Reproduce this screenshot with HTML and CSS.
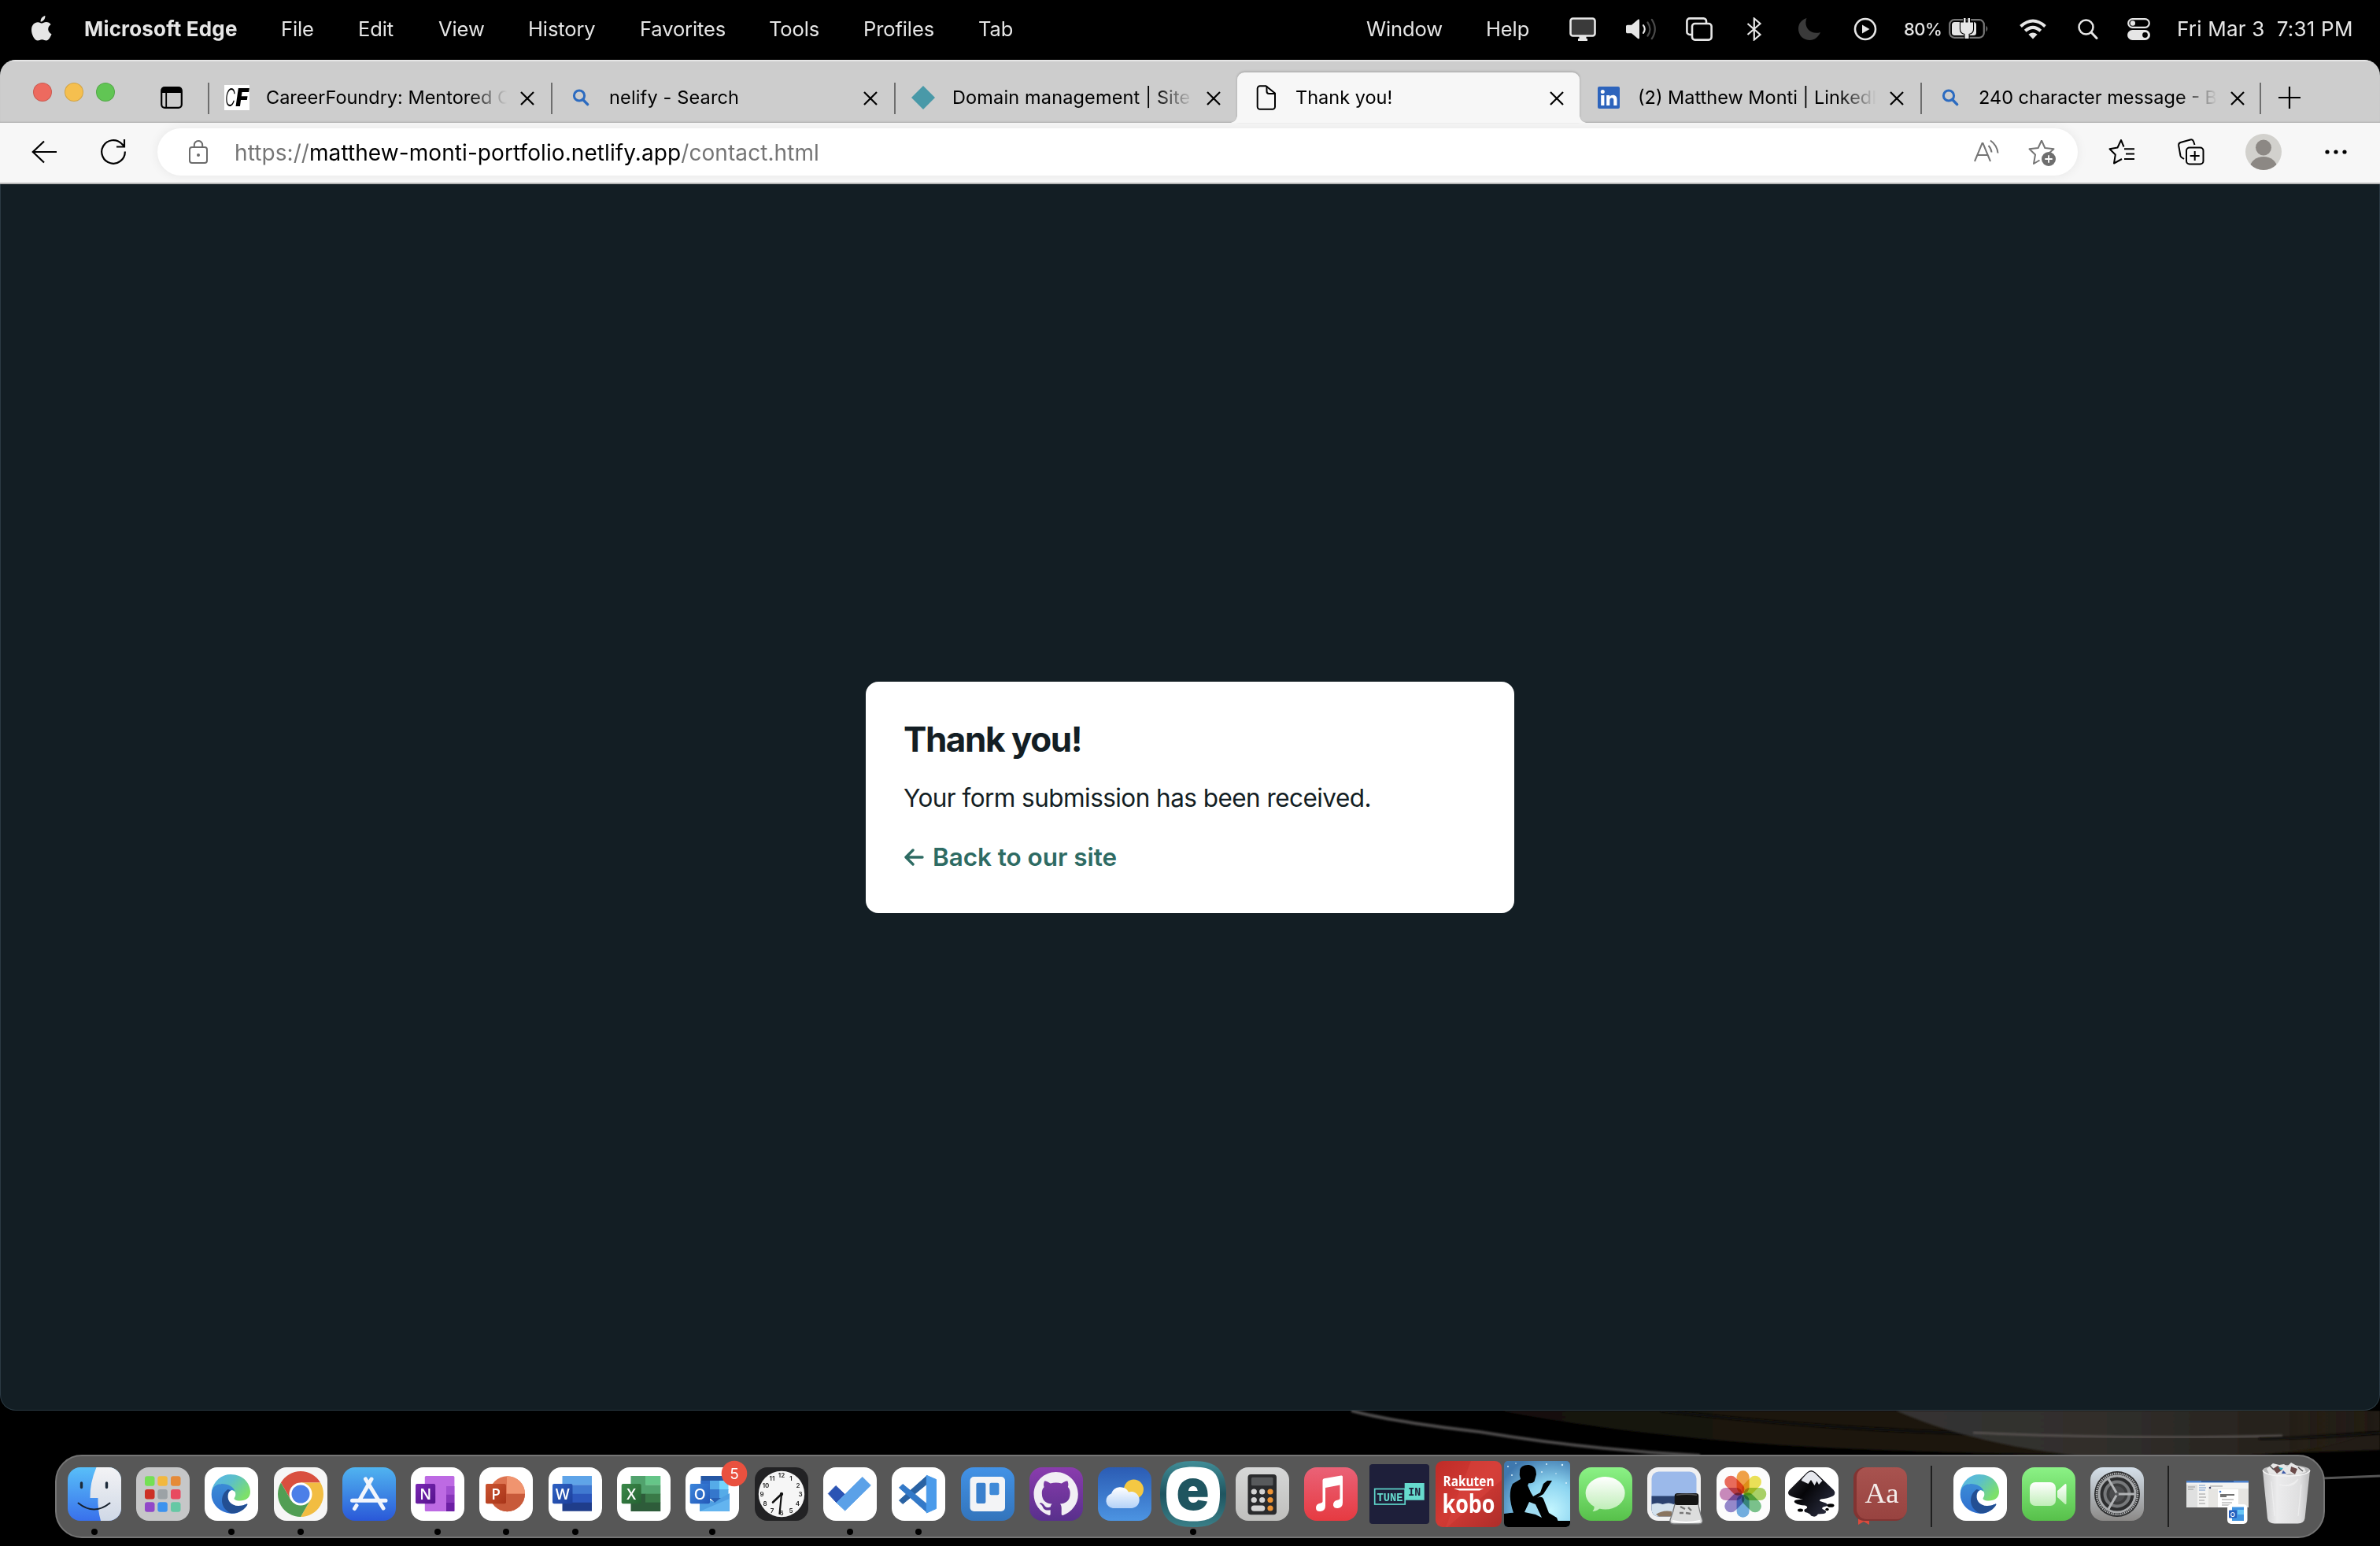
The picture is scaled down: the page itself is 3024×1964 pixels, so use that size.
FILE: index.html
```html
<!DOCTYPE html>
<html lang="en">
<head>
<meta charset="utf-8">
<title>Thank you!</title>
<link rel="stylesheet" href="styles.css">
</head>
<body>
<svg class="defs" width="0" height="0" aria-hidden="true">
  <defs>
    <linearGradient id="g-finder-l" x1="0" y1="0" x2="0" y2="1"><stop offset="0" stop-color="#5cc8fa"/><stop offset="1" stop-color="#3567ea"/></linearGradient>
    <linearGradient id="g-finder-r" x1="0" y1="0" x2="0" y2="1"><stop offset="0" stop-color="#f3f3f5"/><stop offset="1" stop-color="#cfd8e6"/></linearGradient>
    <linearGradient id="g-edge-top" x1="0" y1="0" x2="1" y2=".6"><stop offset="0" stop-color="#58b4ee"/><stop offset=".5" stop-color="#5cc0c8"/><stop offset="1" stop-color="#7de06a"/></linearGradient>
    <linearGradient id="g-edge-blue" x1="0" y1="0" x2="0" y2="1"><stop offset="0" stop-color="#3b8bd6"/><stop offset="1" stop-color="#2f6fd0"/></linearGradient>
    <linearGradient id="g-store" x1="0" y1="0" x2="0" y2="1"><stop offset="0" stop-color="#50b4f0"/><stop offset="1" stop-color="#2a58d8"/></linearGradient>
    <linearGradient id="g-git" x1="0" y1="0" x2="0" y2="1"><stop offset="0" stop-color="#8a3cae"/><stop offset="1" stop-color="#58308c"/></linearGradient>
    <linearGradient id="g-trello" x1="0" y1="0" x2="0" y2="1"><stop offset="0" stop-color="#4292e6"/><stop offset="1" stop-color="#3374bb"/></linearGradient>
    <linearGradient id="g-weather" x1="0" y1="0" x2="0" y2="1"><stop offset="0" stop-color="#2b5cb4"/><stop offset="1" stop-color="#4c94e2"/></linearGradient>
    <linearGradient id="g-cloud" x1="0" y1="0" x2="0" y2="1"><stop offset="0" stop-color="#fff"/><stop offset="1" stop-color="#b4d2f8"/></linearGradient>
    <linearGradient id="g-e" x1="0" y1="0" x2="0" y2="1"><stop offset="0" stop-color="#418d97"/><stop offset=".5" stop-color="#1f5560"/><stop offset="1" stop-color="#3a7f88"/></linearGradient>
    <linearGradient id="g-music" x1="0" y1="0" x2="0" y2="1"><stop offset="0" stop-color="#ea6277"/><stop offset="1" stop-color="#e63a41"/></linearGradient>
    <linearGradient id="g-grey" x1="0" y1="0" x2="0" y2="1"><stop offset="0" stop-color="#d6d7d7"/><stop offset="1" stop-color="#bfbfbd"/></linearGradient>
    <linearGradient id="g-kobo" x1="0" y1="0" x2="1" y2="1"><stop offset="0" stop-color="#bf2c27"/><stop offset=".5" stop-color="#d13a34"/><stop offset="1" stop-color="#ad2d2a"/></linearGradient>
    <radialGradient id="g-kindle" cx=".7" cy=".75" r=".85"><stop offset="0" stop-color="#c4f6ff"/><stop offset=".5" stop-color="#8cd4f0"/><stop offset="1" stop-color="#3f78ae"/></radialGradient>
    <linearGradient id="g-green" x1="0" y1="0" x2="0" y2="1"><stop offset="0" stop-color="#8bf286"/><stop offset="1" stop-color="#57c04a"/></linearGradient>
    <linearGradient id="g-bubble" x1="0" y1="0" x2="0" y2="1"><stop offset="0" stop-color="#fff"/><stop offset="1" stop-color="#c0eeb8"/></linearGradient>
    <linearGradient id="g-ink" x1="0" y1="0" x2="1" y2=".8"><stop offset="0" stop-color="#2c2c34"/><stop offset=".45" stop-color="#050508"/><stop offset="1" stop-color="#2c2f42"/></linearGradient>
    <linearGradient id="g-dict" x1="0" y1="0" x2="0" y2="1"><stop offset="0" stop-color="#a8534f"/><stop offset="1" stop-color="#984340"/></linearGradient>
    <linearGradient id="g-set" x1="0" y1="0" x2="0" y2="1"><stop offset="0" stop-color="#d5e0ea"/><stop offset="1" stop-color="#8b8987"/></linearGradient>
    <linearGradient id="g-badge-n" x1="0" y1="0" x2="1" y2="1"><stop offset="0" stop-color="#7a28b4"/><stop offset="1" stop-color="#55128c"/></linearGradient>
    <linearGradient id="g-badge-p" x1="0" y1="0" x2="1" y2="1"><stop offset="0" stop-color="#cb5430"/><stop offset="1" stop-color="#a83418"/></linearGradient>
    <linearGradient id="g-badge-w" x1="0" y1="0" x2="1" y2="1"><stop offset="0" stop-color="#2f62c4"/><stop offset="1" stop-color="#1c3f9c"/></linearGradient>
    <linearGradient id="g-badge-x" x1="0" y1="0" x2="1" y2="1"><stop offset="0" stop-color="#3c8a4a"/><stop offset="1" stop-color="#256232"/></linearGradient>
    <linearGradient id="g-badge-o" x1="0" y1="0" x2="1" y2="1"><stop offset="0" stop-color="#3b86dc"/><stop offset="1" stop-color="#2458b8"/></linearGradient>
    <linearGradient id="g-trash" x1="0" y1="0" x2="1" y2="0"><stop offset="0" stop-color="#c9c9ca"/><stop offset=".3" stop-color="#ececed"/><stop offset=".8" stop-color="#dededf"/><stop offset="1" stop-color="#bcbcbd"/></linearGradient>
    <linearGradient id="g-brown" x1="0" y1="0" x2="1" y2="0"><stop offset="0" stop-color="#12100c"/><stop offset=".25" stop-color="#1a1610"/><stop offset=".7" stop-color="#1c1911"/><stop offset="1" stop-color="#231d12"/></linearGradient>
    <linearGradient id="g-sheen" x1="0" y1="0" x2="1" y2="0"><stop offset="0" stop-color="#353433"/><stop offset=".5" stop-color="#2f2d2a"/><stop offset=".8" stop-color="#26211b"/><stop offset="1" stop-color="#221b12" stop-opacity="0"/></linearGradient>
    <filter id="soft" x="-5%" y="-20%" width="110%" height="140%"><feGaussianBlur stdDeviation="1"/></filter>
    <clipPath id="tileclip"><rect x="8" y="8" width="68" height="68" rx="16"/></clipPath>
    <clipPath id="kindleclip"><rect width="84" height="84" rx="5"/></clipPath>
    <symbol id="close" viewBox="0 0 18 18"><path d="M1 1 17 17M17 1 1 17" stroke="#000" stroke-width="2.2" fill="none"/></symbol>
    <symbol id="find" viewBox="0 0 22 22"><circle cx="9" cy="8.5" r="6.6" fill="none" stroke="#2c6bc0" stroke-width="3"/><path d="M13.4 13.2 19.6 19.6" stroke="#2c6bc0" stroke-width="3.4" stroke-linecap="round"/></symbol>
    <symbol id="white" viewBox="0 0 84 84"><rect x="8" y="8" width="68" height="68" rx="16" fill="#fff"/></symbol>
    <symbol id="edge" viewBox="0 0 84 84">
      <rect x="8" y="8" width="68" height="68" rx="16" fill="#fff"/>
      <path fill="url(#g-edge-top)" d="M16.8 39C19 25 30 17 41 17c16 0 25 11.500 25 22 0 8-6 11.500-13 11.500-6 0-8.500-2-7-4 1.500-2 1.800-5 .5-7.500L28 29z"/>
      <path fill="url(#g-edge-blue)" d="M16.700 42.500C16.700 33 23 29 30 29c8 0 15 4 16.500 9.500C44 36 40 37 38.500 40.500 35 48 40 58 50 58c6 0 9.500-3.500 12-3.500 1 .8-5 8-11 10.800-4.500 2-10.500 2-15 .500C24 62.500 16.700 53 16.700 42.500z"/>
      <path fill="#234f93" d="M37.500 36C27 43 27 60 41.500 66.500c10 .5 18-5 21-11.200 0-2.300-3 1.700-11.500 1.700-10 0-15.500-8-13-16.500 1-2.500 3-3.500 3-3.500z"/>
    </symbol>
  </defs>
</svg>

<header class="menubar">
  <svg class="apple" viewBox="0 0 26 32"><path fill="#e6e6e6" d="M17.400 0c.2 2.200-.6 4.200-1.800 5.600-1.200 1.400-2.700 2.100-4 2-.2-2 .6-4 1.800-5.300C14.600 1 16.200.1 17.400 0zM13.300 9.600c1.500 0 2.800-1.500 5.500-1.500 2.300 0 4.500 1.200 5.800 3.200-5 2.900-4.200 9.800.9 11.900-.8 2.200-3.300 8.300-6.700 8.400-2.200 0-2.900-1.300-5.400-1.300s-3.300 1.300-5.400 1.300C4.100 31.600 0 24.200 0 17.900c0-6.200 3.900-9.700 8-9.700 2.500 0 3.900 1.400 5.300 1.400z"/></svg>
  <nav class="menus">
    <span class="app">Microsoft Edge</span><span>File</span><span>Edit</span><span>View</span><span>History</span><span>Favorites</span><span>Tools</span><span>Profiles</span><span>Tab</span><span>Window</span><span>Help</span>
  </nav>
  <div class="status">
    <svg width="34" height="30" viewBox="0 0 34 30"><rect x="1.500" y="1.500" width="31" height="22" rx="3" fill="#3a3a3a" stroke="#e6e6e6" stroke-width="2.600"/><path d="M12.500 24h9v3h1.500v3H11v-3h1.500z" fill="#e6e6e6"/></svg>
    <svg width="39" height="28" viewBox="0 0 39 28"><path d="M0 10.500C0 9.500.8 8.700 1.800 8.700H7L15 2c1-.8 2-.3 2 .9v22.200c0 1.200-1 1.700-2 .9l-8-6.700H1.800c-1 0-1.800-.8-1.800-1.800z" fill="#e6e6e6"/><g fill="none" stroke-width="2.200" stroke-linecap="round"><path d="M22 9.200q3.500 4.800 0 9.600" stroke="#e6e6e6"/><path d="M27.500 5.500q6 8.500 0 17M32.800 1.800q8 12.200 0 24.400" stroke="#4a4a4a"/></g></svg>
    <svg width="34" height="30" viewBox="0 0 34 30"><g fill="none" stroke="#e6e6e6" stroke-width="2.600"><path d="M7 22H5a3.600 3.600 0 0 1-3.600-3.600V5A3.600 3.600 0 0 1 5 1.400h17.500A3.600 3.600 0 0 1 26 5v2"/><rect x="8" y="8" width="24.600" height="20.600" rx="3.600"/></g></svg>
    <svg width="20" height="30" viewBox="0 0 20 30"><path d="M1.500 8 17.500 22 9.800 28.500V1.500L17.500 8 1.500 22" fill="none" stroke="#e6e6e6" stroke-width="2.200"/></svg>
    <svg width="28" height="28" viewBox="0 0 28 28"><path d="M10.500 0C6 11 15 22 28 18 25.500 24 20.500 28 14.500 28 6 28 0 21.500 0 13.500 0 7 4 2 10.500 0z" fill="#3a3a3a"/></svg>
    <svg width="30" height="30" viewBox="0 0 30 30"><circle cx="15" cy="15" r="13" fill="none" stroke="#e6e6e6" stroke-width="2.600"/><path d="M11 9.500v11l9.500-5.500z" fill="#e6e6e6"/></svg>
    <span class="pct">80%</span>
    <svg width="51" height="28" viewBox="0 0 51 28"><rect x="1.200" y="2.200" width="43.600" height="22.600" rx="6" fill="none" stroke="#777" stroke-width="2.200"/><path d="M47.500 9.500q3.500 4 0 8z" fill="#777"/><rect x="4" y="5" width="31" height="17" rx="3.500" fill="#e6e6e6"/><path d="M19 0v5.500h-4V14q0 5 5.500 6v6h5v-6q5.500-1 5.500-6V5.500h-4V0h-2.500v5.500h-3V0z" fill="#e6e6e6" stroke="#000" stroke-width="2.200" paint-order="stroke"/></svg>
    <svg width="34" height="26" viewBox="0 0 34 26"><g fill="none" stroke="#e6e6e6" stroke-width="4"><path d="M1.500 9.500q15.500-14 31 0"/><path d="M7.200 15.200q9.800-8.800 19.600 0"/></g><path d="M17 25.500l-5.600-5.700q5.600-4.400 11.200 0z" fill="#e6e6e6"/></svg>
    <svg width="26" height="26" viewBox="0 0 26 26"><circle cx="10.500" cy="10.500" r="9" fill="none" stroke="#e6e6e6" stroke-width="2.500"/><path d="M17 17l7 7.500" stroke="#e6e6e6" stroke-width="3" stroke-linecap="round"/></svg>
    <svg width="29" height="28" viewBox="0 0 29 28"><rect x="1.200" y="1.200" width="26.600" height="10.600" rx="5.300" fill="none" stroke="#e6e6e6" stroke-width="2.200"/><circle cx="6.800" cy="6.500" r="3.200" fill="#e6e6e6"/><rect y="15" width="29" height="13" rx="6.500" fill="#e6e6e6"/><circle cx="22.500" cy="21.500" r="3.400" fill="#000"/></svg>
    <span class="clock">Fri Mar 3&nbsp; 7:31 PM</span>
  </div>
</header>

<main class="window">
  <div class="tabstrip">
    <div class="lights"><i class="red"></i><i class="amber"></i><i class="green"></i></div>
    <svg class="tabmenu" viewBox="0 0 28 28"><rect x="1.200" y="1.200" width="25.600" height="25.600" rx="4" fill="none" stroke="#000" stroke-width="2.200"/><path d="M1 8V4a3 3 0 0 1 3-3h20a3 3 0 0 1 3 3v4z"/><path d="M7.200 8v19" stroke="#000" stroke-width="1.800"/></svg>
    <div class="tab">
      <svg class="fav" viewBox="0 0 32 32"><rect width="32" height="32" fill="#fff"/><text x="1" y="27" class="cf-c" textLength="13" lengthAdjust="spacingAndGlyphs">C</text><text x="14.500" y="27" class="cf-f" textLength="16" lengthAdjust="spacingAndGlyphs">F</text></svg>
      <span class="title">CareerFoundry: Mentored Online</span><svg class="x"><use href="#close"/></svg>
    </div>
    <div class="tab">
      <svg class="fav find"><use href="#find"/></svg>
      <span class="title loose">nelify - Search</span><svg class="x"><use href="#close"/></svg>
    </div>
    <div class="tab">
      <svg class="fav" viewBox="0 0 32 32"><path d="M16 1 31 16 16 31 1 16z" fill="#4999a8"/></svg>
      <span class="title loose">Domain management | Site settings</span><svg class="x"><use href="#close"/></svg>
    </div>
    <div class="tab active">
      <svg class="fav" viewBox="0 0 32 32"><path d="M8 1.200h7.500L27 10.500v17a3.300 3.300 0 0 1-3.300 3.300H8a3.300 3.300 0 0 1-3.300-3.300v-23A3.300 3.300 0 0 1 8 1.200z" fill="none" stroke="#000" stroke-width="2"/><path d="M16.500 1.500v6.500a3 3 0 0 0 3 3H27" fill="none" stroke="#000" stroke-width="2"/></svg>
      <span class="title">Thank you!</span><svg class="x"><use href="#close"/></svg>
    </div>
    <div class="tab narrow">
      <svg class="fav" viewBox="0 0 32 32"><rect x="2" y="2" width="28" height="28" rx="2" fill="#2d64bc"/><circle cx="8.300" cy="8.500" r="2.500" fill="#fff"/><path d="M6.200 13h4.200v13H6.200zM13.200 13h4v1.900c1.800-3.200 9.300-3.100 9.300 3.100v8h-4.200v-7c0-4-5-3.500-5 .2V26h-4.100z" fill="#fff"/></svg>
      <span class="title">(2) Matthew Monti | LinkedIn</span><svg class="x"><use href="#close"/></svg>
    </div>
    <div class="tab narrow last">
      <svg class="fav find"><use href="#find"/></svg>
      <span class="title">240 character message - Bing</span><svg class="x"><use href="#close"/></svg>
    </div>
    <svg class="plus" viewBox="0 0 28 28"><path d="M14 0v28M0 14h28" stroke="#000" stroke-width="2.200"/></svg>
  </div>

  <div class="toolbar">
    <svg class="back" viewBox="0 0 32 30"><path d="M16 1.500 1.800 15 16 28.500M2 15h30" fill="none" stroke="#000" stroke-width="2.200"/></svg>
    <svg class="reload" viewBox="0 0 32 34"><path d="M30.800 16.500A14.800 14.800 0 1 1 26.500 6.500L29.500 9.500M30 1v9.500H20" fill="none" stroke="#000" stroke-width="2.200"/></svg>
    <div class="address">
      <svg class="lock" viewBox="0 0 24 30"><rect x="1" y="9" width="22" height="20" rx="3" fill="none" stroke="#6b6b6b" stroke-width="2"/><path d="M6.800 9V6.200a5.200 5.200 0 0 1 10.400 0V9" fill="none" stroke="#6b6b6b" stroke-width="2"/><circle cx="12" cy="19" r="2" fill="#6b6b6b"/></svg>
      <span class="url"><em>https://</em>matthew-monti-portfolio.netlify.app<em>/contact.html</em></span>
      <svg class="aloud" viewBox="0 0 32 30"><g fill="none" stroke="#757575" stroke-width="2"><path d="M1 28 10.500 5h1L21 28M4.500 20h13"/><path d="M18.500 8q3.500 3.500 4 8.500M21 1.500q8.500 6 9.500 16" /></g></svg>
      <svg class="star" viewBox="0 0 36 36"><path d="M17 2.500 21.300 12 32.500 13.200 27 18M14.500 27.500 7 32l2-11.500L1.500 13.200 12.600 12 17 2.500" fill="none" stroke="#757575" stroke-width="2" stroke-linejoin="round"/><circle cx="26" cy="26" r="9" fill="#6e6e6e"/><path d="M26 21.300v9.400M21.300 26h9.400" stroke="#fff" stroke-width="1.800"/></svg>
    </div>
    <svg class="favs" viewBox="0 0 34 34"><path d="M19.500 10.500 16 2l-4.500 9.500L1.500 13.200 8.800 20.500 7 31.500 17 26" fill="none" stroke="#000" stroke-width="2" stroke-linejoin="round"/><path d="M20 13.200h13M22 19.500h11M20 26h13" stroke="#000" stroke-width="2"/></svg>
    <svg class="coll" viewBox="0 0 34 34"><g fill="none" stroke="#000" stroke-width="2"><path d="M8 26 5 24Q4 23.500 3.500 22L1.200 9q-.4-3 2.300-4L16 1.500q3-.8 4 2L21.500 8"/><rect x="11" y="11.500" width="21.500" height="21" rx="4"/><path d="M21.700 16v12M15.700 22h12"/></g></svg>
    <svg class="avatar" viewBox="0 0 46 46"><clipPath id="av"><circle cx="23" cy="23" r="23"/></clipPath><g clip-path="url(#av)"><rect width="46" height="46" fill="#d2d1cd"/><circle cx="23" cy="17.500" r="10" fill="#8c8884"/><ellipse cx="23" cy="43" rx="17" ry="14" fill="#8c8884"/></g></svg>
    <svg class="more" viewBox="0 0 28 6"><circle cx="3" cy="3" r="2.600"/><circle cx="14" cy="3" r="2.600"/><circle cx="25" cy="3" r="2.600"/></svg>
  </div>

  <div class="page">
    <section class="card">
      <h1>Thank you!</h1>
      <p>Your form submission has been received.</p>
      <a><svg class="arrow" viewBox="0 0 26 22"><path d="M12 2 3 11l9 9M3.500 11H24" fill="none" stroke="#2e6b63" stroke-width="3.400" stroke-linecap="round" stroke-linejoin="round"/></svg>Back to our site</a>
    </section>
  </div>
</main>

<footer class="desktop">
  <svg class="wallpaper" viewBox="0 0 3024 172">
    <path d="M1905 0C2020 22 2160 38 2300 46 2480 56 2760 60 3024 50V0z" fill="url(#g-brown)" filter="url(#soft)"/>
    <path d="M2110 0Q2300 22 2480 28L2780 36Q2900 36 3024 28" fill="none" stroke="#0c0a07" stroke-width="4" filter="url(#soft)"/>
    <path d="M2409 0C2450 18 2520 44 2640 57H2800Q2960 58 3024 20V0z" fill="url(#g-sheen)" filter="url(#soft)"/>
    <path d="M2507 28Q2700 37 2900 32" fill="none" stroke="#54504d" stroke-width="3" filter="url(#soft)"/>
    <path d="M2870 36Q2960 34 3024 28" fill="none" stroke="#100c08" stroke-width="3" filter="url(#soft)"/>
    <path d="M1717 0C1760 12 1820 20 1880 27Q2020 50 2160 57" fill="none" stroke="#4c4a4a" stroke-width="4" filter="url(#soft)"/>
    <path d="M2950 86 3024 83" stroke="#555" stroke-width="3"/>
  </svg>
  <div class="dock">
    <div class="cell run"><svg viewBox="0 0 84 84"><g clip-path="url(#tileclip)"><rect width="84" height="84" fill="url(#g-finder-l)"/><path d="M44.500 8Q36 28 36.500 47H46.500Q46 62 50 76H76V8z" fill="url(#g-finder-r)"/></g><path d="M25.500 28v5.500M57.500 28v5.500" stroke="#1c2a3a" stroke-width="3.400" stroke-linecap="round"/><path d="M21.500 53.500q20 16 40 0" fill="none" stroke="#16202c" stroke-width="2" stroke-linecap="round"/></svg></div>
    <div class="cell"><svg viewBox="0 0 84 84"><rect x="8" y="8" width="68" height="68" rx="16" fill="#c6c7c8"/><g><rect x="19" y="19.300" width="12.500" height="12.500" rx="3" fill="#74e054"/><rect x="35.300" y="19.300" width="12.500" height="12.500" rx="3" fill="#f2b83e"/><rect x="52" y="19.300" width="12.500" height="12.500" rx="3" fill="#e58a38"/><rect x="19" y="36" width="12.500" height="12.500" rx="3" fill="#cc3025"/><rect x="35.300" y="36" width="12.500" height="12.500" rx="3" fill="#9ca2a6"/><rect x="52" y="36" width="12.500" height="12.500" rx="3" fill="#e84a60"/><rect x="19" y="52.200" width="12.500" height="12.500" rx="3" fill="#9148c8"/><rect x="35.300" y="52.200" width="12.500" height="12.500" rx="3" fill="#3c92ee"/><rect x="52" y="52.200" width="12.500" height="12.500" rx="3" fill="#66c8a4"/></g></svg></div>
    <div class="cell run"><svg><use href="#edge"/></svg></div>
    <div class="cell run"><svg viewBox="0 0 84 84"><rect x="8" y="8" width="68" height="68" rx="16" fill="#f6f6f6"/><path d="M16.900 27.500A29 29 0 0 1 67.100 27.500H42L29.450 49.250z" fill="#d9503f"/><path d="M16.900 27.500A29 29 0 0 1 67.100 27.500H42L29.450 49.250z" fill="#f2bd42" transform="rotate(120 42 42)"/><path d="M16.900 27.500A29 29 0 0 1 67.100 27.500H42L29.450 49.250z" fill="#519e54" transform="rotate(240 42 42)"/><circle cx="42" cy="42" r="14.500" fill="#fff"/><circle cx="42" cy="42" r="11.500" fill="#4b7fe8"/></svg></div>
    <div class="cell"><svg viewBox="0 0 84 84"><rect x="8" y="8" width="68" height="68" rx="16" fill="url(#g-store)"/><path d="M37.500 23 60 60M45 23 30 49.500M26 56.500 23.500 60.500M20.500 50.200H63" stroke="#f2f6fc" stroke-width="5" stroke-linecap="round" fill="none"/></svg></div>
    <div class="cell run"><svg viewBox="0 0 84 84"><use href="#white"/><rect x="25.800" y="19" width="37.600" height="45" rx="1.500" fill="#bd6ae3"/><path d="M53 32h10.400v10.500H53z" fill="#a24fd1"/><path d="M53 42.500h10.400v10.500H53z" fill="#8836bb"/><path d="M53 53h10.400v11H53z" fill="#6c1fa4"/><rect x="14" y="29" width="25.200" height="25.300" rx="2" fill="url(#g-badge-n)"/><text x="26.600" y="48.500" class="badge">N</text></svg></div>
    <div class="cell run"><svg viewBox="0 0 84 84"><use href="#white"/><circle cx="43.500" cy="41.700" r="22.500" fill="#dd7350"/><path d="M43 19.200A22.500 22.500 0 0 1 66 41.700H43z" fill="#f0946f"/><path d="M21 41.700H66A22.500 22.500 0 0 1 21 41.700z" fill="#c85a3a"/><rect x="16" y="29" width="26" height="25.300" rx="2" fill="url(#g-badge-p)"/><text x="29" y="48.500" class="badge">P</text></svg></div>
    <div class="cell run"><svg viewBox="0 0 84 84"><use href="#white"/><path d="M25.500 19H63v11.700H25.500z" fill="#5fa4e8"/><path d="M25.500 30.500H63v11.700H25.500z" fill="#4079d1"/><path d="M25.500 41.700H63v11.500H25.500z" fill="#2c57bc"/><path d="M25.500 52.700H63v11H25.500z" fill="#1f3d8a"/><rect x="13" y="29" width="25.500" height="25.300" rx="2" fill="url(#g-badge-w)"/><text x="25.800" y="48.500" class="badge">W</text></svg></div>
    <div class="cell"><svg viewBox="0 0 84 84"><use href="#white"/><path d="M25.500 19H44.500v23H25.500z" fill="#51a26d"/><path d="M44 19h19.300v11.700H44z" fill="#65c588"/><path d="M44 30.500h19.300v11.700H44z" fill="#51a26d"/><path d="M25.500 41.700h19V64h-19z" fill="#2e5c3a"/><path d="M44 41.700h19.300v11.500H44z" fill="#3a7a48"/><path d="M44 52.700h19.300V64H44z" fill="#2e5c3a"/><rect x="13.700" y="29" width="25" height="25.300" rx="2" fill="url(#g-badge-x)"/><text x="26.200" y="48.500" class="badge">X</text></svg></div>
    <div class="cell run"><svg viewBox="0 0 84 84"><use href="#white"/><path d="M27.500 19H62v10H27.500z" fill="#2557a4"/><path d="M27.500 25H39v22H27.500z" fill="#2f6cc8"/><path d="M39 25h12v12H39z" fill="#55abe8"/><path d="M51 25h11.500v12H51z" fill="#74d5fb"/><path d="M39 36h12v12H39z" fill="#3577cc"/><path d="M51 36h11.500v12H51z" fill="#55abe8"/><path d="M26 43l18 9 20-11v23H26z" fill="#4f9fe2"/><path d="M26 64 63.500 48v16z" fill="#63b4ef"/><path d="M39 47l6 6 8-6z" fill="#2860b4"/><rect x="13.700" y="29" width="25.300" height="25.300" rx="2" fill="url(#g-badge-o)"/><text x="26.300" y="48.500" class="badge">O</text><circle cx="70" cy="16" r="16.300" fill="#e9513f"/><text x="70" y="22.500" class="count">5</text></svg></div>
    <div class="cell"><svg viewBox="0 0 84 84"><rect x="8" y="8" width="68" height="68" rx="16" fill="#222224"/><circle cx="42" cy="42" r="29.200" fill="#f6f6f6"/><g class="dial"><text x="42" y="21">12</text><text x="54" y="24.500">1</text><text x="63" y="33.500">2</text><text x="66" y="45">3</text><text x="62.500" y="57">4</text><text x="54" y="65.500">5</text><text x="42" y="69">6</text><text x="30" y="65.500">7</text><text x="21" y="57">8</text><text x="17" y="45">9</text><text x="22" y="33.500">10</text><text x="30" y="24.500">11</text></g><path d="M42 42 31 52.500" stroke="#111" stroke-width="2.600" stroke-linecap="round"/><path d="M42 42 39.500 67" stroke="#111" stroke-width="2.200" stroke-linecap="round"/><circle cx="42" cy="42" r="2.200" fill="#111"/></svg></div>
    <div class="cell run"><svg viewBox="0 0 84 84"><use href="#white"/><path d="M14.300 41.500 24 31.500 36 43 25 53z" fill="#2b54b4" stroke="#2b54b4" stroke-linejoin="round"/><path d="M57.800 20.500 68.300 31 35.700 63 25 53z" fill="#5ba1e8" stroke="#5ba1e8" stroke-linejoin="round"/></svg></div>
    <div class="cell run"><svg viewBox="0 0 84 84"><use href="#white"/><path d="M17.500 50 22 54.500 53 29V18.500z" fill="#2962a3" stroke="#2962a3" stroke-linejoin="round"/><path d="M17.500 34 22 29.500 53 55V65.500z" fill="#3379c8" stroke="#3379c8" stroke-linejoin="round"/><path d="M52.300 18.300 64.500 23.500V60.500L52.300 66z" fill="#4b9bea" stroke="#4b9bea" stroke-linejoin="round"/></svg></div>
    <div class="cell"><svg viewBox="0 0 84 84"><rect x="8" y="8" width="68" height="68" rx="16" fill="url(#g-trello)"/><rect x="19.500" y="20" width="44.500" height="44" rx="5" fill="#f3f4f6"/><rect x="27.400" y="27.700" width="12" height="26.300" rx="2" fill="#3a80cd"/><rect x="44.400" y="27.700" width="12" height="15.500" rx="2" fill="#3f8ad8"/></svg></div>
    <div class="cell"><svg viewBox="0 0 84 84"><rect x="8" y="8" width="68" height="68" rx="16" fill="url(#g-git)"/><path transform="translate(13.500 14) scale(3.520)" fill="#f1eff4" d="M8 0C3.580 0 0 3.580 0 8c0 3.540 2.290 6.530 5.470 7.590.4.070.55-.17.55-.38 0-.19-.01-.82-.01-1.490-2.010.37-2.530-.49-2.690-.94-.09-.23-.48-.94-.82-1.130-.28-.15-.68-.52-.01-.53.63-.01 1.080.58 1.230.82.72 1.210 1.870.87 2.330.66.07-.52.28-.87.51-1.070-1.780-.2-3.640-.89-3.640-3.950 0-.87.31-1.590.82-2.150-.08-.2-.36-1.020.08-2.120 0 0 .67-.21 2.200.82.64-.18 1.320-.27 2-.27.68 0 1.360.09 2 .27 1.530-1.040 2.200-.82 2.200-.82.44 1.100.16 1.920.08 2.120.51.56.82 1.270.82 2.150 0 3.070-1.870 3.750-3.650 3.950.29.25.54.73.54 1.480 0 1.070-.01 1.930-.01 2.200 0 .21.150.46.550.38A8.013 8.013 0 0 0 16 8c0-4.420-3.580-8-8-8z"/></svg></div>
    <div class="cell"><svg viewBox="0 0 84 84"><rect x="8" y="8" width="68" height="68" rx="16" fill="url(#g-weather)"/><circle cx="53.500" cy="36" r="12.500" fill="#f4c843"/><path d="M27 60a9.500 9.500 0 0 1-2-18.500A12 12 0 0 1 47 39.500 10.500 10.500 0 1 1 50 60z" fill="url(#g-cloud)"/></svg></div>
    <div class="cell run"><svg viewBox="0 0 84 84"><path d="M42 0C72 0 84 12 84 42S72 84 42 84 0 72 0 42 12 0 42 0z" fill="url(#g-e)"/><path d="M42 7.500C68 7.500 76 16 76 42S68 76.500 42 76.500 8 68 8 42 16 7.500 42 7.500z" fill="#fff"/><text x="41.500" y="61.800" class="bige" textLength="42" lengthAdjust="spacingAndGlyphs">e</text></svg></div>
    <div class="cell"><svg viewBox="0 0 84 84"><rect x="8" y="8" width="68" height="68" rx="16" fill="url(#g-grey)"/><rect x="23.500" y="17" width="36.500" height="51.300" rx="4" fill="#2a2b2d"/><rect x="28" y="20.700" width="27.500" height="10.500" rx="1.500" fill="#585a5c"/><g fill="#d4d4d4"><circle cx="31.300" cy="39" r="3.600"/><circle cx="41.700" cy="39" r="3.600"/><circle cx="31.300" cy="49.500" r="3.600"/><circle cx="41.700" cy="49.500" r="3.600"/><rect x="27.700" y="56.500" width="17.600" height="7.200" rx="3.600"/></g><g fill="#ef9435"><circle cx="52" cy="39" r="3.600"/><circle cx="52" cy="49.500" r="3.600"/><circle cx="52" cy="60" r="3.600"/></g></svg></div>
    <div class="cell"><svg viewBox="0 0 84 84"><rect x="8" y="8" width="68" height="68" rx="16" fill="url(#g-music)"/><path d="M31.500 24.500q0-1.800 2-2.200L55 18.500q2-.4 2 1.500v33q0 6-6 7-5 .5-6-3.500-.5-6 6-7 2.500-.4 2.500-2V30.500L35 34v23q0 6-6 7-6 .5-6-4.500 0-5 6-6 2.500-.5 2.500-2z" fill="#fff"/></svg></div>
    <div class="cell"><svg viewBox="0 0 84 84"><rect x="4" y="4" width="76" height="76" rx="4" fill="#1e1f3a"/><rect x="10.700" y="35.500" width="38.500" height="19.500" fill="none" stroke="#5fd5cb" stroke-width="1.700"/><path d="M48.700 28h25v21.700h-25z" fill="#66dace"/><text x="30" y="51" class="tune" fill="#66dace" textLength="33" lengthAdjust="spacingAndGlyphs">TUNE</text><text x="61.200" y="44.300" class="tune" fill="#1e1f3a" textLength="16" lengthAdjust="spacingAndGlyphs">IN</text></svg></div>
    <div class="cell"><svg viewBox="0 0 84 84"><rect width="84" height="84" rx="9" fill="url(#g-kobo)"/><path d="M45 0h30q9 0 9 9v15L15 84h-2z" fill="#db4640" opacity=".45"/><text x="42" y="32" class="rakuten" textLength="65" lengthAdjust="spacingAndGlyphs">Rakuten</text><path d="M23 35h38l-5 2.500H30z" fill="#fff"/><text x="42" y="65.500" class="kobo" textLength="67" lengthAdjust="spacingAndGlyphs">kobo</text></svg></div>
    <div class="cell"><svg viewBox="0 0 84 84"><g clip-path="url(#kindleclip)"><rect width="84" height="84" fill="url(#g-kindle)"/><g fill="#d8f0fb"><circle cx="5" cy="7" r="1"/><circle cx="15" cy="3" r=".8"/><circle cx="54" cy="4" r="1"/><circle cx="74" cy="5" r="1.200"/><circle cx="48" cy="14" r="1"/><circle cx="66" cy="16" r=".8"/><circle cx="79" cy="28" r="1"/><circle cx="10" cy="18" r="1"/></g><path d="M20 13C20 3 39 2 40.500 13l.5 4-2.500 9q-3 3-7 2L30 31l4 9 3 5 9-5 4-11 5-4h6L50 42 38 49.500 42 47q6-3 8 1l7 18 10 6 1.500 4H84V84H0V67q14-2 12-1Q4 42 11 29l10-6q-2-5-1-10z"/><path d="M32 52l-6 13 14 3 8 4-8-17z" fill="#9edaf0"/></g></svg></div>
    <div class="cell"><svg viewBox="0 0 84 84"><rect x="8" y="8" width="68" height="68" rx="16" fill="url(#g-green)"/><ellipse cx="41.600" cy="40.700" rx="25" ry="20.800" fill="url(#g-bubble)"/><path d="M28 56q0 5-2.500 8 7-.5 10-5z" fill="#c4efbd"/></svg></div>
    <div class="cell"><svg viewBox="0 0 84 84"><rect x="8" y="8" width="68" height="68" rx="14" fill="#f0f0f1"/><rect x="13.500" y="13.500" width="57" height="57" rx="9" fill="#9bb9ea"/><path d="M13.500 44.500h57V61q0 9.500-9.500 9.500H23q-9.500 0-9.500-9.500z" fill="#2b4270"/><path d="M13.500 55q8-3 14 0 8-3 14 0l14-2v17.500H23q-9.500 0-9.500-9.500z" fill="#d4e2ee"/><path d="M19 68q8-6 20-4v6.500H23z" fill="#8a7560"/><path d="M43 55h30q1 8 5 20 1 5-5 5H42q-6 0-5-5 4-10 6-20z" fill="#dcdddd" stroke="#77797b" stroke-width="1.300"/><path d="M50 58l6 3M60 59l4 4M49 66h5M57 66l6 1" stroke="#777" stroke-width="2.400"/><path d="M40 76q17 4 35 0" stroke="#fff" stroke-width="2" fill="none"/><rect x="42.700" y="41" width="30.600" height="15" rx="3.500" fill="#141414"/><path d="M45 43.200q13-2 26 0" stroke="#555" stroke-width="1.500" fill="none"/></svg></div>
    <div class="cell"><svg viewBox="0 0 84 84"><rect x="8" y="8" width="68" height="68" rx="16" fill="#fcfcfc"/><g class="petals"><rect x="33.600" y="12.300" width="16" height="29" rx="8" fill="#f19a38"/><rect x="33.600" y="12.300" width="16" height="29" rx="8" fill="#ece14a" transform="rotate(45 41.600 42)"/><rect x="33.600" y="12.300" width="16" height="29" rx="8" fill="#a3cf5b" transform="rotate(90 41.600 42)"/><rect x="33.600" y="12.300" width="16" height="29" rx="8" fill="#70bf83" transform="rotate(135 41.600 42)"/><rect x="33.600" y="12.300" width="16" height="29" rx="8" fill="#67a8df" transform="rotate(180 41.600 42)"/><rect x="33.600" y="12.300" width="16" height="29" rx="8" fill="#8d80c9" transform="rotate(225 41.600 42)"/><rect x="33.600" y="12.300" width="16" height="29" rx="8" fill="#c681b6" transform="rotate(270 41.600 42)"/><rect x="33.600" y="12.300" width="16" height="29" rx="8" fill="#ea5f4e" transform="rotate(315 41.600 42)"/></g></svg></div>
    <div class="cell"><svg viewBox="0 0 84 84"><use href="#white"/><path d="M36 14.500Q41.300 9.500 46.600 14.500L69.500 36.500Q73.500 41.500 69 44.500 62 48 53.500 48.500 50 50.500 54 51.500L60 53.500Q64 56 60.500 57.500 54 58.500 55.500 61L59.500 63Q61.500 66 57 67L50 67.500Q47 72.500 41 69.500 40 66.500 33.500 65 30.500 62 35 60.500 38 58 33.500 56.500 24 56 20.500 53 18.500 50.500 22 49.500L31 48.500Q20 47 13.500 43.500 10.500 40.500 13.500 37z" fill="url(#g-ink)"/><path d="M36.500 15.500Q41.300 11.500 46 15.500L55.500 25 51 30 48.500 25.500 45.500 31 41 24 37.500 29 29 25q-1-1 7.500-9.500z" fill="#e6e8ee"/><ellipse cx="66" cy="56.500" rx="4.500" ry="2.300"/><ellipse cx="27.500" cy="62.500" rx="3.500" ry="2"/><ellipse cx="61.500" cy="61.500" rx="2.200" ry="1.800"/></svg></div>
    <div class="cell"><svg viewBox="0 0 84 84"><path d="M14 70h14v11l-7-4-7 4z" fill="#dc4a3c"/><rect x="8" y="8" width="67" height="68" rx="14" fill="#823432"/><rect x="12" y="8" width="64" height="66" rx="13" fill="url(#g-dict)"/><text x="44" y="52.500" class="dict" textLength="43" lengthAdjust="spacingAndGlyphs">Aa</text></svg></div>
    <i class="sep"></i>
    <div class="cell"><svg><use href="#edge"/></svg></div>
    <div class="cell"><svg viewBox="0 0 84 84"><rect x="8" y="8" width="68" height="68" rx="16" fill="url(#g-green)"/><rect x="18" y="27" width="33" height="30" rx="7" fill="url(#g-bubble)"/><path d="M53 38 62.500 29.500q2-1.500 2 1v23q0 2.500-2 1L53 46z" fill="url(#g-bubble)"/></svg></div>
    <div class="cell"><svg viewBox="0 0 84 84"><rect x="8" y="8" width="68" height="68" rx="16" fill="url(#g-set)"/><circle cx="42" cy="42" r="29" fill="#2c2d2e"/><circle cx="42" cy="42" r="26" fill="none" stroke="#b4b6b8" stroke-width="2.600" stroke-dasharray="1.400 1.100"/><circle cx="42" cy="42" r="23" fill="none" stroke="#a9abad" stroke-width="3"/><circle cx="42" cy="42" r="15.500" fill="#3b3c3d" stroke="#77797b" stroke-width="4"/><circle cx="42" cy="42" r="10" fill="#4c4d4f"/><path d="M42 42H64M42 42 31 61M42 42 31 23" stroke="#b2b4b6" stroke-width="3"/><circle cx="42" cy="42" r="2" fill="#55575a"/></svg></div>
    <i class="sep"></i>
    <div class="cell"><svg viewBox="0 0 84 84"><rect x="3" y="25" width="79" height="34" fill="#f3f3f2"/><path d="M3 25h79v2.500H3z" fill="#4a80cc"/><path d="M22 25.300h41v1.500H22z" fill="#284f8c"/><path d="M3 30h14v29H3z" fill="#dfe0e0"/><path d="M31 35h51v24H31z" fill="#e6e5e2"/><path d="M43 36h26v23H43z" fill="#fff"/><g stroke="#a0b8d8" stroke-width="1.300"><path d="M19 31h8M19 34h9M19 37h8"/></g><g stroke="#999" stroke-width="1"><path d="M5 33h9M5 36h7M19 42h8M19 46h9M19 50h7M19 54h8M33 32h16M48 49h15M48 53h13M48 56h15"/></g><path d="M46 43h18M46 45h8" stroke="#444" stroke-width="1.300"/><circle cx="46" cy="39" r="1.300" fill="#4a80cc"/><circle cx="33" cy="34" r="1.300" fill="#446"/><rect x="55" y="55" width="25.500" height="25" rx="5" fill="#fff"/><path d="M61 58.500h15V76H61z" fill="#3f93e0"/><path d="M68 62h8v6h-8z" fill="#66c4f5"/><rect x="57" y="62.500" width="10" height="10" rx="1" fill="#245fbe"/><text x="62" y="70.500" class="tiny">O</text></svg></div>
    <div class="cell"><svg viewBox="0 0 84 84"><path d="M13 12h60L66.500 73q-1 6-9 6.500H28q-8-.5-9-6.500z" fill="url(#g-trash)"/><ellipse cx="43" cy="11.500" rx="30" ry="6.500" fill="#b9b9ba"/><path d="M18 10 26 3l8 2 6-1 4 3 5-5 9 5 8 2 2 5-12 4-9-2-8 3-10-2-8-1z" fill="#e6e6e6"/><path d="M26 10l6-4 6 5-7 5zM49 7l8 3-3 7-6-4z" fill="#6b4b4a"/><path d="M33 8l6 1-3 3z" fill="#33b6c8"/><path d="M39 12l4 4h-6z" fill="#3d5aa8"/><path d="M22 6l5 5M58 8l6 5" stroke="#555" stroke-width="1.500"/><path d="M13 12q3 7 30 7t30-7" fill="none" stroke="#f4f4f4" stroke-width="1.600"/><path d="M34 30q14 4 24-7-6 12-24 7zM24 26l4 44M62 30l-4 40" fill="#fafafa" stroke="#f6f6f6" stroke-width="1.200" opacity=".6"/></svg></div>
  </div>
</footer>
</body>
</html>
```
FILE: styles.css
```css
* { box-sizing: border-box; }
body {
  margin: 0;
  width: 3024px;
  height: 1964px;
  overflow: hidden;
  display: flex;
  flex-direction: column;
  background: #000;
  font-family: Inter, "Liberation Sans", sans-serif;
}
svg { display: block; flex: none; }
.defs { position: absolute; }

/* menu bar */
.menubar {
  height: 76px;
  display: flex;
  align-items: center;
  padding: 0 30px 3px 40px;
  color: #e6e6e6;
  font-size: 25.500px;
}
.apple { width: 26px; height: 32px; margin: -2px 41px 0 0; }
.menus {
  display: grid;
  grid-template-columns: 250px 98px 102px 114px 142px 164px 120px 146px 493px 152px 106px;
  white-space: nowrap;
  letter-spacing: -0.100px;
}
.app { font-size: 26px; font-weight: 700; letter-spacing: 0.180px; }
.status { flex: 1; display: flex; align-items: center; }
.status > :nth-child(2) { margin-left: 38px; }
.status > :nth-child(3) { margin-left: 37px; }
.status > :nth-child(4) { margin-left: 43px; }
.status > :nth-child(5) { margin-left: 46px; }
.status > :nth-child(6) { margin-left: 42px; }
.status > :nth-child(7) { margin-left: 34px; }
.status > :nth-child(9) { margin-left: 39px; }
.status > :nth-child(10) { margin-left: 40px; }
.status > :nth-child(11) { margin-left: 37px; }
.status > :nth-child(12) { margin-left: 34px; }
.pct { width: 57px; font-size: 22px; font-weight: 500; letter-spacing: -0.500px; }
.clock { white-space: nowrap; font-size: 26px; letter-spacing: 0.220px; }

/* browser window */
.window {
  position: relative;
  z-index: 1;
  height: 1716px;
  display: flex;
  flex-direction: column;
  border-radius: 20px;
  overflow: hidden;
  background: #131e24;
}
.tabstrip {
  height: 80px;
  display: flex;
  align-items: center;
  padding: 16px 0 0 42px;
  background: #cdcdcd;
  box-shadow: inset 0 2px #e6e6e6, inset 0 -2px 2px -1px #aaa;
}
.lights { display: flex; gap: 16px; width: 162px; margin-top: -15px; }
.lights i { width: 24px; height: 24px; border-radius: 50%; border: 1px solid rgba(0, 0, 0, .14); }
.red { background: #ed6a5f; }
.amber { background: #f5bf4f; }
.green { background: #61c554; }
.tabmenu { width: 28px; height: 28px; margin-right: 32px; }
.tab {
  width: 436px;
  height: 64px;
  flex: none;
  display: flex;
  align-items: center;
  padding-left: 21px;
  background: linear-gradient(#6e6e6e, #6e6e6e) 0 13px / 2px 40px no-repeat;
}
.tab.active {
  position: relative;
  width: 435px;
  background: #f7f7f7;
  border-radius: 9px 9px 0 0;
  box-shadow: 0 -1px 3px rgba(0, 0, 0, .22);
}
.tab.active::before, .tab.active::after {
  content: "";
  position: absolute;
  bottom: 0;
  width: 9px;
  height: 9px;
}
.tab.active::before { left: -9px; background: radial-gradient(circle at 0 0, transparent 8.500px, #f7f7f7 9px); }
.tab.active::after { right: -9px; background: radial-gradient(circle at 100% 0, transparent 8.500px, #f7f7f7 9px); }
.tab.active + .tab { background: none; }
.tab.narrow { width: 433px; }
.tab.narrow .title { width: 303px; }
.tab.last { background: linear-gradient(#6e6e6e, #6e6e6e) 0 13px / 2px 40px no-repeat, linear-gradient(#6e6e6e, #6e6e6e) 100% 13px / 2px 40px no-repeat; }
.fav { width: 32px; height: 32px; margin-right: 21px; }
.fav.find { width: 22px; height: 22px; margin: 0 25px 0 6px; }
.title {
  width: 306px;
  font-size: 23.500px;
  white-space: nowrap;
  overflow: hidden;
  line-height: 34px;
  -webkit-mask-image: linear-gradient(90deg, #000 calc(100% - 48px), transparent);
  mask-image: linear-gradient(90deg, #000 calc(100% - 48px), transparent);
}
.title.loose { letter-spacing: 0.150px; }
.x { width: 18px; height: 18px; margin: 2px 0 0 17px; }
.plus { width: 28px; height: 28px; margin: -1px 0 0 22px; }
.cf-c { font: italic 300 31px Inter, sans-serif; }
.cf-f { font: italic 900 31px Inter, sans-serif; }

.toolbar {
  height: 78px;
  display: flex;
  align-items: center;
  padding: 0 42px 2px 40px;
  background: #f7f7f7;
  border-bottom: 2px solid #b8b8b8;
}
.back { width: 32px; height: 30px; margin-right: 56px; }
.reload { width: 32px; height: 34px; margin-right: 40px; }
.address {
  width: 2440px;
  height: 60px;
  flex: none;
  display: flex;
  align-items: center;
  padding: 0 27px 0 40px;
  border-radius: 30px;
  background: #fff;
  box-shadow: 0 0 14px rgba(0, 0, 0, .07);
}
.lock { width: 24px; height: 30px; margin-right: 34px; }
.url { flex: 1; padding-top: 2px; font-size: 28px; letter-spacing: 0.080px; white-space: nowrap; color: #000; }
.url em { font-style: normal; color: #757575; }
.aloud { width: 32px; height: 30px; margin: -2px 37px 0 0; }
.star { width: 36px; height: 36px; margin-top: 2px; }
.favs { width: 34px; height: 34px; margin-left: 39px; }
.coll { width: 34px; height: 34px; margin-left: 54px; }
.avatar { width: 46px; height: 46px; margin-left: 52px; }
.more { width: 28px; height: 6px; margin-left: 55px; }

.page {
  flex: 1;
  display: flex;
  align-items: center;
  justify-content: center;
  border: 1px solid #2b3a43;
  border-top: 0;
  border-radius: 0 0 20px 20px;
}
.card {
  width: 824px;
  height: 294px;
  padding: 45px 48px;
  border-radius: 16px;
  background: #fff;
  color: #131e24;
}
.card h1 { margin: 0; font-size: 44px; line-height: 56px; font-weight: 700; letter-spacing: -1.450px; }
.card p { margin: 23px 0 0; font-size: 31.500px; line-height: 48px; white-space: nowrap; letter-spacing: -0.550px; }
.card a { display: flex; align-items: center; margin-top: 27px; font-size: 31.500px; line-height: 48px; font-weight: 600; letter-spacing: -0.050px; color: #2e6b63; }
.arrow { width: 26px; height: 22px; margin-right: 11px; }

/* desktop and dock */
.desktop { position: relative; height: 172px; display: flex; justify-content: center; padding-top: 56px; }
.wallpaper { position: absolute; inset: 0; width: 3024px; height: 172px; }
.dock {
  position: relative;
  width: 2884px;
  height: 106px;
  display: flex;
  padding-left: 4px;
  border: 2px solid #757575;
  border-radius: 34px;
  background: #575757;
}
.cell {
  width: 87.300px;
  flex: none;
  display: flex;
  flex-direction: column;
  align-items: center;
  padding-top: 6px;
}
.cell svg { width: 84px; height: 84px; overflow: visible; }
.run::after { content: ""; width: 8px; height: 8px; border-radius: 50%; background: #000; margin-top: 2px; }
.sep { width: 2px; height: 78px; flex: none; margin: 12px 17px 0 20px; background: #1f1f1f; }
.badge { font: 600 19px "Open Sans", sans-serif; fill: #fff; text-anchor: middle; }
.tiny { font: 600 8px "Open Sans", sans-serif; fill: #fff; text-anchor: middle; }
.count { font: 400 19px Inter, sans-serif; fill: #fff; text-anchor: middle; }
.dial { font: 600 8px Inter, sans-serif; text-anchor: middle; fill: #222; }
.bige { font: 900 72px Inter, sans-serif; text-anchor: middle; fill: #1f5560; }
.tune { font: 700 15px "Liberation Mono", monospace; text-anchor: middle; }
.rakuten { font: 700 17.500px "Open Sans", sans-serif; fill: #fff; text-anchor: middle; }
.kobo { font: 700 33px "Open Sans", sans-serif; fill: #fff; text-anchor: middle; }
.dict { font: 400 36px "Liberation Serif", serif; fill: #f4ecea; text-anchor: middle; }
.petals rect { mix-blend-mode: multiply; opacity: .92; }
```
